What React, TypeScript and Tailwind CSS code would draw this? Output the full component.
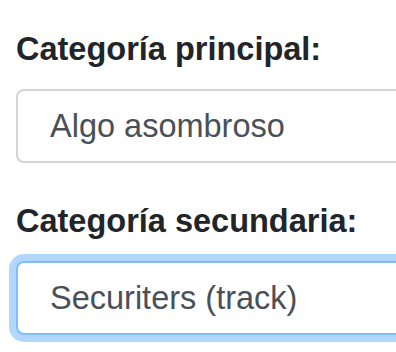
import React from 'react';

// 카테고리 선택 필드
function Field({ label, value, focused }: { label: string; value: string; focused?: boolean }) {
  return (
    <div>
      <label className="block h-[48px] text-[32.5px] leading-[48px] font-bold text-[#212529] whitespace-nowrap">
        {label}
      </label>
      <div
        className={
          focused
            ? 'mt-[16px] flex h-[74px] w-[440px] items-center rounded-[8px] border-2 border-[#80bdff] bg-white pl-[32px] shadow-[0_0_0_7px_rgba(0,123,255,0.3)]'
            : 'mt-[16px] flex h-[74px] w-[440px] items-center rounded-[8px] border-2 border-[#d3d6d9] bg-white pl-[32px]'
        }
      >
        <span className="text-[32.5px] leading-[48px] text-[#495057] whitespace-nowrap">{value}</span>
      </div>
    </div>
  );
}

export default function App() {
  return (
    <div
      className="h-[352px] w-[396px] overflow-hidden bg-white pl-[16px] pt-[25px]"
      style={{ fontFamily: '"Liberation Sans", Arial, sans-serif' }}
    >
      <div className="flex flex-col gap-[34px]">
        <Field label="Categoría principal:" value="Algo asombroso" />
        <Field label="Categoría secundaria:" value="Securiters (track)" focused />
      </div>
    </div>
  );
}
